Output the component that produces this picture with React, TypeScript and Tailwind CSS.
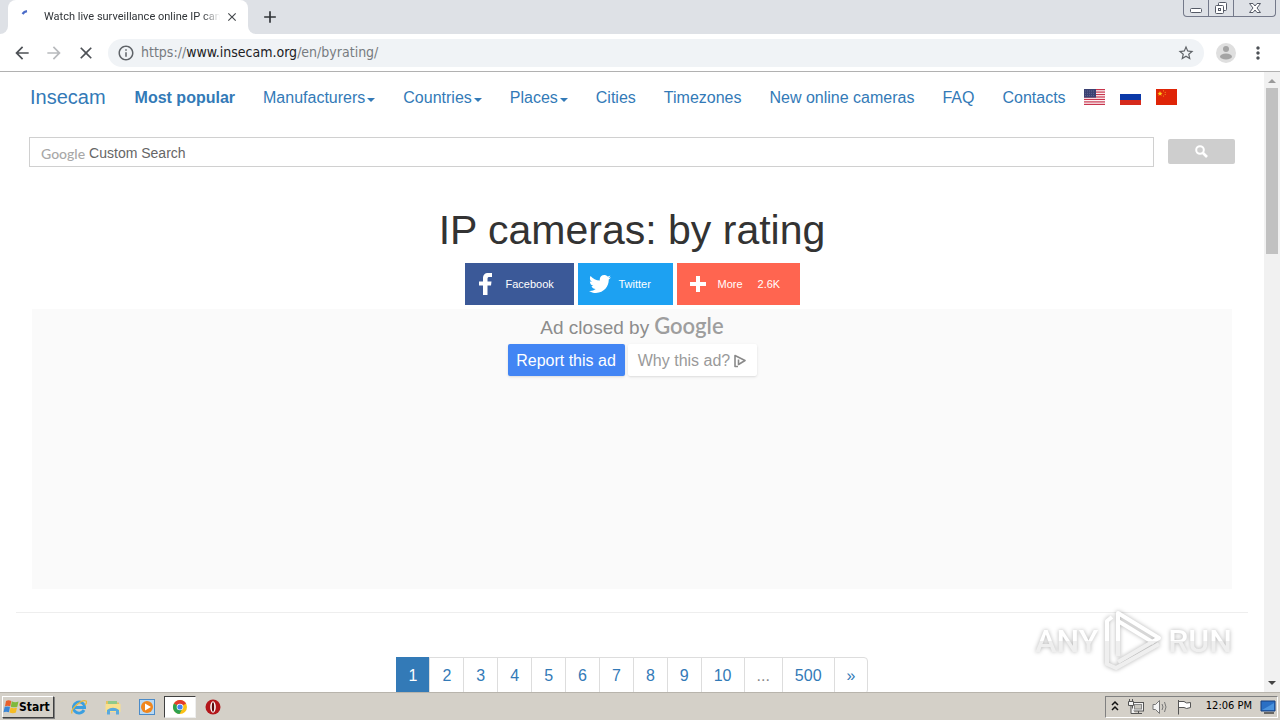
import type { ReactNode } from "react";
import {
    MdAdd,
    MdArrowBack,
    MdArrowForward,
    MdClose,
    MdInfoOutline,
    MdMoreVert,
    MdStarBorder,
} from "react-icons/md";
import { FaTwitter } from "react-icons/fa";

const navLinks = [
    { label: "Most popular", bold: true },
    { label: "Manufacturers", caret: true },
    { label: "Countries", caret: true },
    { label: "Places", caret: true },
    { label: "Cities" },
    { label: "Timezones" },
    { label: "New online cameras" },
    { label: "FAQ" },
    { label: "Contacts" },
];

const pages = ["1", "2", "3", "4", "5", "6", "7", "8", "9", "10", "...", "500", "»"];

// Window chrome: tab strip and the caption buttons
function TabStrip() {
    return (
        <div className="flex h-[34px] shrink-0 items-start justify-between bg-[#dee1e6]">
            <div className="flex h-full">
                <div className="w-2 bg-white">
                    <div className="h-full rounded-br-lg bg-[#dee1e6]" />
                </div>
                <div className="flex h-full w-60 items-center rounded-t-lg bg-white pr-2 pl-3">
                    <svg className="size-4 shrink-0" viewBox="0 0 16 16" fill="none">
                        <path d="M2.5 5 A7 7 0 0 1 7 2.200" stroke="#4a6bc8" strokeWidth="2.200" />
                    </svg>
                    <span className="ml-2 w-[176px] shrink-0 mask-r-from-90% font-['Roboto',sans-serif] text-[11px] whitespace-nowrap text-[#303438]">
                        Watch live surveillance online IP cam
                    </span>
                    <button className="ml-1 flex size-4 items-center justify-center text-[#45494d]" aria-label="Close tab">
                        <MdClose className="size-[14px]" stroke="currentColor" />
                    </button>
                </div>
                <div className="w-2 bg-white">
                    <div className="h-full rounded-bl-lg bg-[#dee1e6]" />
                </div>
                <button className="ml-1 flex w-5 items-center justify-center text-[#303438]" aria-label="New tab">
                    <MdAdd className="size-5" />
                </button>
            </div>
            <div className="mr-1 flex h-[17px] rounded-b border border-t-0 border-[#74798a] text-[#555a66]">
                <button className="flex w-[25px] items-center justify-center border-r border-[#74798a]" aria-label="Minimize">
                    <svg className="h-4 w-[14px]" viewBox="0 0 14 16" fill="#fff" stroke="currentColor">
                        <rect x="1.5" y="8.5" width="11" height="4" rx="1" />
                    </svg>
                </button>
                <button className="flex w-[25px] items-center justify-center border-r border-[#74798a]" aria-label="Restore">
                    <svg className="h-4 w-[14px]" viewBox="0 0 14 16" fill="#fff" stroke="currentColor">
                        <rect x="4.5" y="2.5" width="8" height="8" rx="1" />
                        <rect x="1.5" y="5.5" width="8" height="8" rx="1" />
                        <rect x="4.5" y="8.5" width="2" height="2" />
                    </svg>
                </button>
                <button className="flex w-[41px] items-center justify-center" aria-label="Close">
                    <svg className="h-4 w-[14px]" viewBox="0 0 14 16" fill="#fff" stroke="currentColor">
                        <path d="M1.500 3.500 H5 L7 6 L9 3.500 H12.500 L9 8 L12.500 12.500 H9 L7 10 L5 12.500 H1.500 L5 8 Z" />
                    </svg>
                </button>
            </div>
        </div>
    );
}

function Toolbar() {
    return (
        <div className="flex h-[38px] shrink-0 items-center border-b border-[#b1b1b1] bg-white pr-3 pl-3">
            <button className="text-[#4d5156]" aria-label="Back">
                <MdArrowBack className="size-5" />
            </button>
            <button className="ml-3 text-[#b8babd]" aria-label="Forward">
                <MdArrowForward className="size-5" />
            </button>
            <button className="ml-3 text-[#4d5156]" aria-label="Stop loading">
                <MdClose className="size-5" />
            </button>
            <div className="ml-3 flex h-7 flex-1 items-center rounded-full bg-[#f0f3f6] px-[9px]">
                <MdInfoOutline className="size-[18px] text-[#5f6368]" />
                <span className="ml-1 flex-1 pl-[2px] text-[14px] text-[#777b80]">
                    https://<span className="text-[#202124]">www.insecam.org</span>/en/byrating/
                </span>
                <button className="text-[#5f6368]" aria-label="Bookmark this page">
                    <MdStarBorder className="size-[18px]" />
                </button>
            </div>
            <button className="ml-3" aria-label="Profile">
                <svg className="size-5" viewBox="0 0 20 20">
                    <circle cx="10" cy="10" r="10" fill="#dfdfdf" />
                    <circle cx="10" cy="6" r="3" fill="#a4a4a4" />
                    <ellipse cx="10" cy="13.5" rx="6" ry="3" fill="#a4a4a4" />
                </svg>
            </button>
            <button className="ml-3 text-[#4d5156]" aria-label="Menu">
                <MdMoreVert className="size-5" />
            </button>
        </div>
    );
}

function UsFlag() {
    return (
        <svg className="h-4 w-[21px]" viewBox="0 0 21 16">
            <rect width="21" height="16" fill="#fff" />
            {[0, 1, 2, 3, 4, 5, 6].map((n) => (
                <rect key={n} y={n * 2.46} width="21" height="1.23" fill="#c8354d" />
            ))}
            <rect width="12" height="8.6" fill="#3c4273" />
            {[2, 4.3, 6.6].map((y) => (
                <path key={y} d={`M1 ${y} H11`} stroke="#8e93b3" strokeWidth="0.6" strokeDasharray="0.8 1.2" />
            ))}
        </svg>
    );
}

function RuFlag() {
    return (
        <svg className="h-4 w-[21px]" viewBox="0 0 21 16">
            <rect width="21" height="16" fill="#fff" />
            <rect y="5" width="21" height="6" fill="#0b39a8" />
            <rect y="11" width="21" height="5" fill="#d62a1c" />
        </svg>
    );
}

function CnFlag() {
    return (
        <svg className="h-4 w-[21px]" viewBox="0 0 21 16">
            <rect width="21" height="16" fill="#df2407" />
            <path d="M4 2 L4.7 3.8 L6.6 3.9 L5.1 5 L5.6 6.8 L4 5.8 L2.4 6.8 L2.9 5 L1.4 3.9 L3.3 3.8 Z" fill="#ffd21a" />
            <g fill="#f39a1a">
                <circle cx="7.5" cy="1.8" r="0.6" />
                <circle cx="9.2" cy="3.3" r="0.6" />
                <circle cx="9.2" cy="5.5" r="0.6" />
                <circle cx="7.5" cy="7" r="0.6" />
            </g>
        </svg>
    );
}

function NavBar() {
    return (
        <nav className="flex h-[50px] items-center px-[15px] text-[16px] text-[#337ab7]">
            <a href="#" className="px-[15px] text-[20px]">
                Insecam
            </a>
            <ul className="flex items-center pt-px whitespace-nowrap">
                {navLinks.map((link) => (
                    <li key={link.label}>
                        <a href="#" className={link.bold ? "flex items-center px-[14px] font-bold" : "flex items-center px-[14px]"}>
                            {link.label}
                            {link.caret && (
                                <span className="mt-1 ml-[2px] border-x-4 border-t-4 border-x-transparent border-t-[#337ab7]" />
                            )}
                        </a>
                    </li>
                ))}
            </ul>
            <div className="ml-1 flex gap-[15px]">
                <a href="#" aria-label="English"><UsFlag /></a>
                <a href="#" aria-label="Russian"><RuFlag /></a>
                <a href="#" aria-label="Chinese"><CnFlag /></a>
            </div>
        </nav>
    );
}

function SearchRow() {
    return (
        <form className="mt-[15px] flex items-center gap-[14px] px-[29px]">
            <label className="flex h-[30px] flex-1 items-center border border-[#d0d0d0] pt-[2px] pl-[11px]">
                <span className="font-['Lato',sans-serif] text-[14px] font-medium text-[#a8a8a8]">Google</span>
                <input
                    className="ml-1 flex-1 text-[14px] outline-none placeholder:text-[#666]"
                    placeholder="Custom Search"
                    aria-label="Custom Search"
                />
            </label>
            <button type="button" className="mb-px flex h-[25px] w-[67px] items-center justify-center rounded-xs bg-[#cecece]" aria-label="Search">
                <svg className="size-[13px]" viewBox="0 0 13 13" fill="none" stroke="#fff">
                    <circle cx="5" cy="5" r="3.8" strokeWidth="2" />
                    <path d="M8 8 L12 12" strokeWidth="2.6" />
                </svg>
            </button>
        </form>
    );
}

function ShareButtons() {
    return (
        <div className="mt-[9px] flex justify-center gap-1 text-[11px] text-white">
            <button className="flex h-[42px] w-[109px] items-center bg-[#3b5998] pl-[14px]">
                <svg className="h-[22px] w-[13px]" viewBox="0 0 13 22" fill="currentColor">
                    <path d="M8.500 22 V12.500 H12 L12.500 8.500 H8.500 V6 C8.500 4.500 9 4 10.500 4 H13 V0 H9.500 C5.500 0 4 2 4 5.500 V8.500 H0 V12.500 H4 V22 Z" />
                </svg>
                <span className="ml-[14px]">Facebook</span>
            </button>
            <button className="flex h-[42px] w-[95px] items-center bg-[#1da1f2] pl-[11px]">
                <FaTwitter className="size-[22px]" />
                <span className="ml-2">Twitter</span>
            </button>
            <button className="flex h-[42px] w-[123px] items-center bg-[#ff6550] pl-[13px]">
                <svg className="size-4" viewBox="0 0 16 16" stroke="currentColor" strokeWidth="4">
                    <path d="M8 0 V16 M0 8 H16" />
                </svg>
                <span className="ml-3">More</span>
                <span className="ml-[15px]">2.6K</span>
            </button>
        </div>
    );
}

function AdBox() {
    return (
        <div className="mx-8 mt-1 flex h-[280px] flex-col items-center bg-[#fafafa] pt-[3px]">
            <div className="flex h-8 items-center gap-[5px] text-[19px] text-[#8c8c8c]">
                <span>Ad closed by</span>
                <span className="mb-1 font-['Lato',sans-serif] text-[22px] leading-7 font-semibold text-[#9e9e9e]">Google</span>
            </div>
            <div className="flex gap-[3px] text-[16px]">
                <button className="h-8 w-[117px] rounded-xs bg-[#4285f4] pt-px text-white shadow">Report this ad</button>
                <button className="flex h-8 w-[129px] items-center justify-center gap-1 rounded-xs bg-white pt-px text-[#9a9a9a] shadow">
                    Why this ad?
                    <svg className="h-[14px] w-3" viewBox="0 0 12 14" fill="none" stroke="#8a8a8a" strokeWidth="1.6">
                        <path d="M4 12.500 H1 V1.500 L11 6.500 L4.500 10.500 V5.500" strokeLinejoin="round" />
                    </svg>
                </button>
            </div>
        </div>
    );
}

function Pagination() {
    return (
        <ul className="mt-11 flex justify-center text-[16px] leading-[22px] text-[#337ab7]">
            {pages.map((page, index) => (
                <li key={page}>
                    <a
                        href="#"
                        className={
                            index === 0
                                ? "block border border-[#337ab7] bg-[#337ab7] px-3 pt-[7px] pb-[6px] text-white"
                                : index === pages.length - 1
                                  ? "-ml-px block rounded-r border border-[#ddd] px-3 pt-[7px] pb-[6px]"
                                  : page === "..."
                                    ? "-ml-px block border border-[#ddd] px-3 pt-[7px] pb-[6px] text-[#888]"
                                    : "-ml-px block border border-[#ddd] px-3 pt-[7px] pb-[6px]"
                        }
                    >
                        {page}
                    </a>
                </li>
            ))}
        </ul>
    );
}

function Scrollbar() {
    return (
        <div className="flex w-4 shrink-0 flex-col items-center bg-[#f1f1f1]">
            <svg className="size-4 shrink-0" viewBox="0 0 16 16" fill="#9a9a9a">
                <path d="M4 11 L8 7 L12 11 Z" />
            </svg>
            <div className="h-[166px] w-3 bg-[#c1c1c1]" />
            <svg className="mt-auto size-4 shrink-0" viewBox="0 0 16 16" fill="#444">
                <path d="M4 5 L8 9 L12 5 Z" />
            </svg>
        </div>
    );
}

function Watermark() {
    return (
        <div className="pointer-events-none absolute right-12 bottom-5 flex items-center gap-[6px] font-['Roboto',sans-serif] text-[32px] leading-none font-medium drop-shadow-[0_0_2px_rgba(0,0,0,0.3)]">
            <span className="bg-linear-to-b from-white from-50% to-[#efefef] to-50% bg-clip-text text-transparent">ANY</span>
            <svg className="h-[62px] w-[58px]" viewBox="0 0 58 62" fill="none" stroke="url(#mark)" strokeWidth="4" strokeLinejoin="round">
                <linearGradient id="mark" gradientUnits="userSpaceOnUse" x1="0" y1="0" x2="0" y2="62">
                    <stop offset="0.5" stopColor="#fff" />
                    <stop offset="0.5" stopColor="#efefef" />
                </linearGradient>
                <path d="M14 46 V3 L55 28 L14 52" />
                <path d="M8 7 L3 11 V54 L12 58 L55 34" />
                <path d="M14 11 L50 33" />
            </svg>
            <span className="bg-linear-to-b from-white from-50% to-[#efefef] to-50% bg-clip-text text-transparent">RUN</span>
        </div>
    );
}

function TaskIcon({ label, active, children }: { label: string; active?: boolean; children: ReactNode }) {
    return (
        <button
            aria-label={label}
            className={
                active
                    ? "flex h-[22px] w-8 items-center justify-center border border-t-[#404040] border-r-[#eee] border-b-[#eee] border-l-[#404040] bg-white"
                    : "flex h-[22px] w-[34px] items-center justify-center"
            }
        >
            <svg className="size-4" viewBox="0 0 16 16">
                {children}
            </svg>
        </button>
    );
}

function Taskbar() {
    return (
        <footer className="flex h-7 shrink-0 items-center justify-between border-t border-[#b8b4ac] bg-[#d4d0c8] pr-[2px] pl-[2px] text-black">
            <div className="flex items-center">
                <button className="mr-2 flex h-[22px] w-[52px] items-center border border-t-white border-r-[#404040] border-b-[#404040] border-l-white text-[12px] font-bold shadow-[1px_1px_0_#808080]">
                    <svg className="size-4 shrink-0" viewBox="0 0 16 16">
                        <path d="M3 2 Q5.500 .5 8.300 2 L7.300 7.300 Q4.500 6 2 7.300 Z" fill="#e8602c" />
                        <path d="M8.800 2.300 Q12 4 15.500 2.500 L14.300 7.700 Q11 9 7.800 7.700 Z" fill="#7fb93c" />
                        <path d="M1.700 7.800 Q4 7 7 7.800 L6 13.300 Q3 12 .5 13.300 Z" fill="#3a86d6" />
                        <path d="M7.600 8.300 Q10.500 10 14 8.500 L12.900 13.500 Q10 15 6.500 13.500 Z" fill="#f5bc25" />
                    </svg>
                    Start
                </button>
                <TaskIcon label="Internet Explorer">
                    <path d="M13 11 A5.600 5.600 0 1 1 13.600 8.500 H4" fill="none" stroke="#3b9fe0" strokeWidth="2.800" />
                    <path d="M1 14.500 C-1 10 11 0 15 2 C16 3 15 5 14 6" fill="none" stroke="#e9b93c" strokeWidth="1.300" />
                </TaskIcon>
                <TaskIcon label="Explorer">
                    <path d="M1 2 H6 L7 3.500 H14 V13 H1 Z" fill="#e6c25e" />
                    <path d="M3 2 H12 V6 H3 Z" fill="#8fc98a" />
                    <path d="M0.500 5 H15.500 V13 H0.500 Z" fill="#f8e08e" />
                    <path d="M2 15.500 V11 Q8 6.500 14 11 V15.500 H11 V12 H5 V15.500 Z" fill="#5aa9dd" />
                </TaskIcon>
                <TaskIcon label="Media Player">
                    <rect x="0.500" y="0.500" width="15" height="15" fill="#b9d9f3" stroke="#4b8bc8" />
                    <circle cx="8" cy="8" r="6" fill="#f0861c" />
                    <path d="M6 4.500 L12 8 L6 11.500 Z" fill="#fff" />
                </TaskIcon>
                <TaskIcon label="Chrome" active>
                    <circle cx="8" cy="8" r="7" fill="#fbc116" />
                    <path d="M8 8 L1.900 4.500 A7 7 0 0 1 14.100 4.500 Z" fill="#e33b2e" />
                    <path d="M8 8 L1.900 4.500 A7 7 0 0 0 7.500 15 L10.500 9.500 Z" fill="#2fa14f" />
                    <circle cx="8" cy="8" r="3.300" fill="#fff" />
                    <circle cx="8" cy="8" r="2.600" fill="#4384f3" />
                </TaskIcon>
                <TaskIcon label="Opera">
                    <circle cx="8" cy="8" r="7.500" fill="#b3161b" />
                    <ellipse cx="8" cy="8" rx="2.800" ry="5.700" fill="#fff" />
                    <ellipse cx="8" cy="8" rx="1.200" ry="4.700" fill="#5c0a0c" />
                </TaskIcon>
            </div>
            <div className="flex h-[22px] items-center border border-t-[#808080] border-r-white border-b-white border-l-[#808080] pr-px pl-1">
                <svg className="h-4 w-[10px]" viewBox="0 0 10 16" fill="none" stroke="#111" strokeWidth="1.500">
                    <path d="M2 6 L5 3 L8 6 M2 11 L5 8 L8 11" />
                </svg>
                <svg className="ml-2 h-4 w-4" viewBox="0 0 16 16" fill="#f4f4f4" stroke="#555">
                    <rect x="4.500" y="3.500" width="11" height="8.500" />
                    <rect x="6.500" y="5.500" width="7" height="4.500" fill="#c9c7c0" stroke="#888" />
                    <path d="M7 14.500 H14 M10.500 12 V14" />
                    <path d="M0.500 2.500 H5.500 V6.500 H0.500 Z M1.500 0 V2.500 M4.500 0 V2.500 M3 6.500 V14.500 H7" />
                </svg>
                <svg className="ml-2 h-4 w-4" viewBox="0 0 16 16" fill="#f4f4f4" stroke="#777">
                    <path d="M1 5.500 H3.500 L7.500 1.500 V14.500 L3.500 10.500 H1 Z" />
                    <path d="M10 5 Q12 8 10 11 M12.500 3 Q15.500 8 12.500 13" fill="none" />
                </svg>
                <svg className="ml-2 h-4 w-4" viewBox="0 0 16 16" fill="#fff" stroke="#555">
                    <path d="M2.500 2.500 H8 Q10 5 14.500 3.500 V8.500 Q10 10.500 8 8.500 H2.500 Z M2.500 1 V15.500" />
                </svg>
                <time className="ml-[14px] text-[11px] whitespace-nowrap">12:06 PM</time>
                <svg className="ml-2 h-4 w-4" viewBox="0 0 16 16">
                    <path d="M1 2 H15 V12 H1 Z" fill="#2a6fc4" stroke="#173f7c" />
                    <path d="M2 11 L14 4 V11 Z" fill="#4b93dd" />
                    <path d="M4 14 H14" stroke="#444" strokeWidth="1.500" />
                </svg>
            </div>
        </footer>
    );
}

export default function App() {
    return (
        <div className="flex h-screen flex-col overflow-hidden bg-white font-['DejaVu_Sans_Condensed','DejaVu_Sans',sans-serif]">
            <TabStrip />
            <Toolbar />
            <div className="relative flex min-h-0 flex-1">
                <main className="min-w-0 flex-1 overflow-hidden font-['Liberation_Sans',Arial,sans-serif]">
                    <NavBar />
                    <SearchRow />
                    <h1 className="mt-[39px] text-center text-[41px] leading-[48px] text-[#333]">IP cameras: by rating</h1>
                    <ShareButtons />
                    <AdBox />
                    <hr className="mx-4 mt-[23px] border-[#eee]" />
                    <Pagination />
                </main>
                <Scrollbar />
                <Watermark />
            </div>
            <Taskbar />
        </div>
    );
}
